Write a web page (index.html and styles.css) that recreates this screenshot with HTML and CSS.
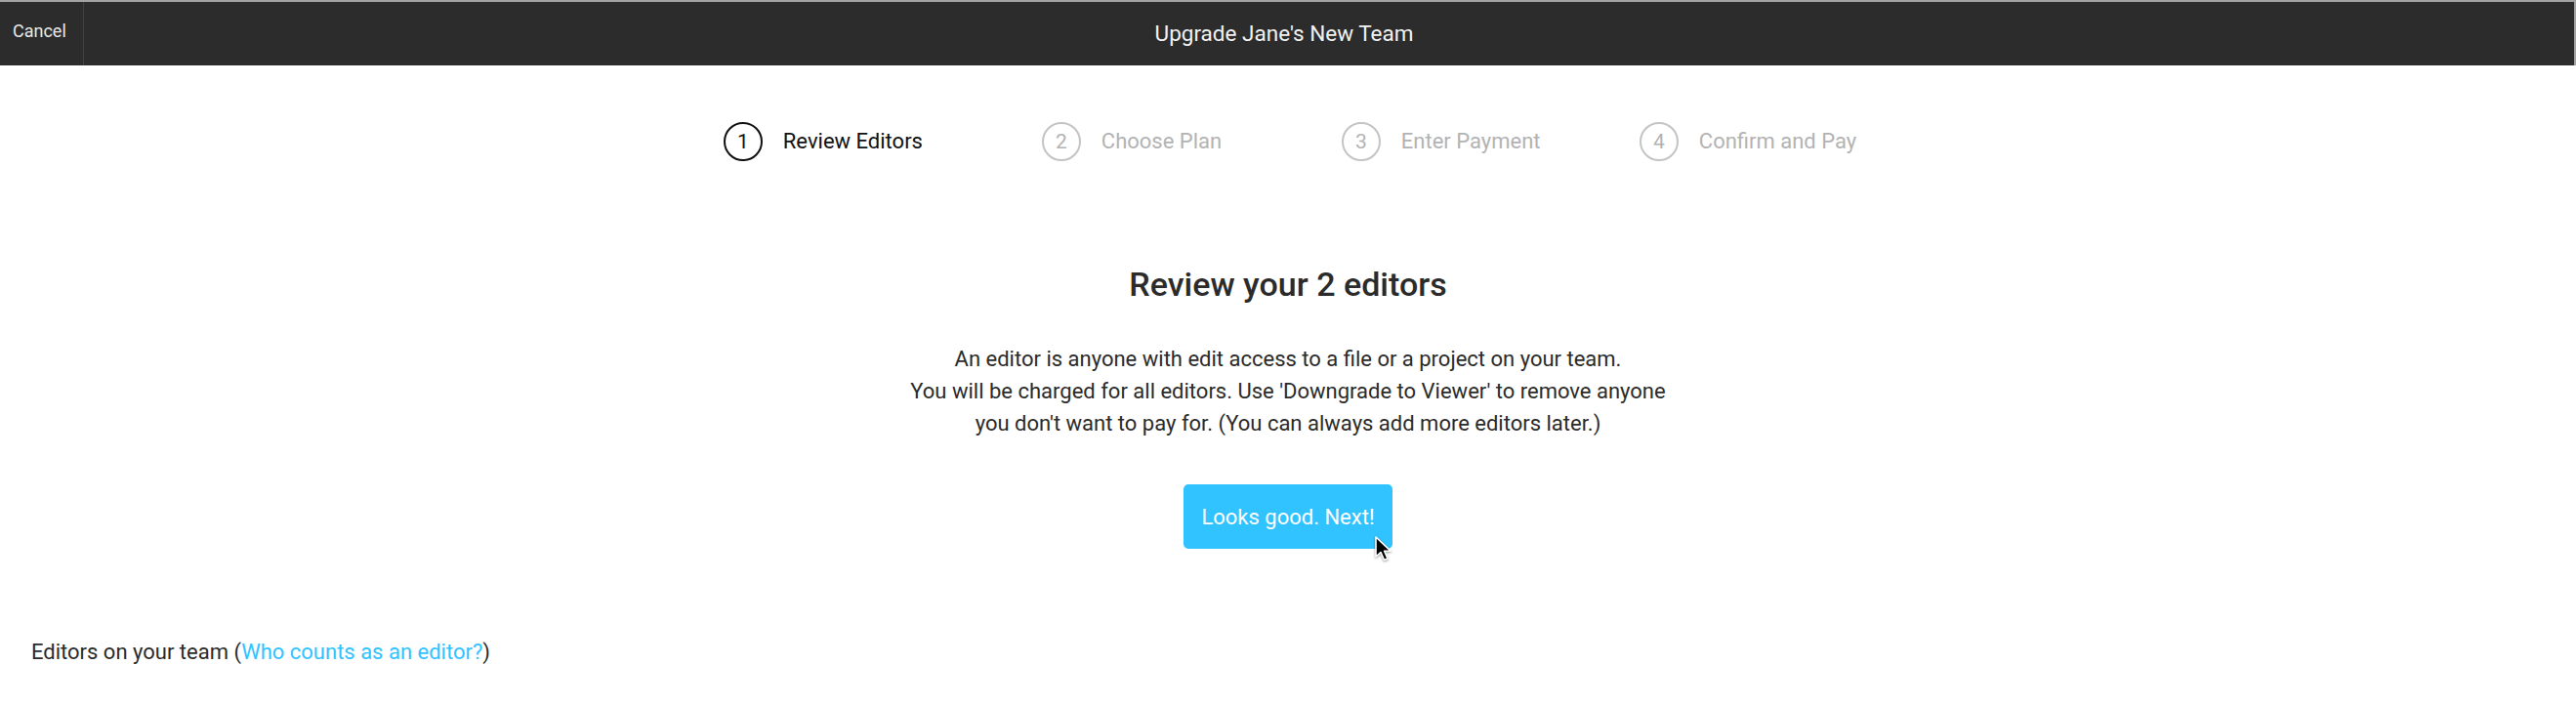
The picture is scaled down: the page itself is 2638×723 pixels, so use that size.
FILE: index.html
```html
<!DOCTYPE html>
<html>
<head>
<meta charset="utf-8">
<link rel="stylesheet" href="styles.css">
</head>
<body>
<header class="topbar">
  <div class="cancel">Cancel</div>
  <div class="title">Upgrade Jane's New Team</div>
</header>
<main class="content">
  <ol class="steps">
    <li class="step active"><span class="num">1</span><span class="label">Review Editors</span></li>
    <li class="step"><span class="num">2</span><span class="label">Choose Plan</span></li>
    <li class="step"><span class="num">3</span><span class="label">Enter Payment</span></li>
    <li class="step"><span class="num">4</span><span class="label">Confirm and Pay</span></li>
  </ol>
  <h1 class="heading">Review your 2 editors</h1>
  <p class="intro">An editor is anyone with edit access to a file or a project on your team.<br>You will be charged for all editors. Use 'Downgrade to Viewer' to remove anyone you don't want to pay for. (You can always add more editors later.)</p>
  <div class="actions">
    <button class="next">Looks good. Next!
      <svg class="cursor" width="20" height="28" viewBox="0 0 20 28"><path d="M2 2 L2 22 L7 17.5 L10.5 25.5 L14 24 L10.6 16.2 L17 16.2 Z" fill="#000" stroke="#fff" stroke-width="1.6" stroke-linejoin="round"/></svg>
    </button>
  </div>
  <div class="team">Editors on your team (<a class="link" href="#">Who counts as an editor?</a>)</div>
</main>
</body>
</html>
```

FILE: styles.css
```css
html, body {
  margin: 0;
  padding: 0;
  background: #ffffff;
  font-family: Roboto, "Liberation Sans", Arial, sans-serif;
}

.topbar {
  height: 65px;
  background: #2c2c2c;
  border-top: 2px solid #a3a3a3;
  border-right: 2px solid #a3a3a3;
  display: flex;
  position: relative;
}

.cancel {
  width: 86px;
  box-sizing: border-box;
  padding: 19px 0 0 13px;
  font-size: 18px;
  color: #e8e8e8;
  border-right: 1px solid #424242;
}

.title {
  flex: 1;
  text-align: center;
  font-size: 22.5px;
  color: #f2f2f2;
  line-height: 65px;
  margin-left: -86px;
  padding-right: 6px;
}

.content {
  display: flex;
  flex-direction: column;
  align-items: center;
}

.steps {
  list-style: none;
  margin: 58px 0 0 4px;
  padding: 0;
  display: grid;
  grid-template-columns: 326px 307px 305px auto;
}

.step {
  display: flex;
  align-items: center;
  gap: 21px;
  color: #b3b3b3;
}

.num {
  width: 36px;
  height: 36px;
  border: 2px solid #c4c4c4;
  border-radius: 50%;
  display: flex;
  align-items: center;
  justify-content: center;
  font-size: 21px;
  color: #b3b3b3;
}

.label {
  font-size: 22px;
  line-height: 40px;
}

.step.active {
  color: #111;
}

.step.active .num {
  border-color: #111;
  color: #111;
}

.heading {
  margin: 106px 0 0 0;
  font-size: 34px;
  line-height: 40px;
  font-weight: 500;
  color: #2b2b2b;
}

.intro {
  margin: 40px 0 0 0;
  width: 790px;
  text-align: center;
  font-size: 22px;
  line-height: 33px;
  color: #2b2b2b;
}

.actions {
  margin-top: 46px;
}

.next {
  position: relative;
  height: 66px;
  padding: 0 18px;
  border: none;
  border-radius: 5px;
  background: #30c3ff;
  color: #ffffff;
  font-family: Roboto, "Liberation Sans", Arial, sans-serif;
  font-size: 22px;
  font-weight: 400;
}

.cursor {
  position: absolute;
  left: 195px;
  top: 52px;
  filter: drop-shadow(0 1px 1px rgba(0,0,0,0.4));
}

.team {
  align-self: flex-start;
  margin: 91px 0 0 32px;
  font-size: 22px;
  line-height: 30px;
  color: #2b2b2b;
}

.link {
  color: #30c3ff;
  text-decoration: none;
}
```
